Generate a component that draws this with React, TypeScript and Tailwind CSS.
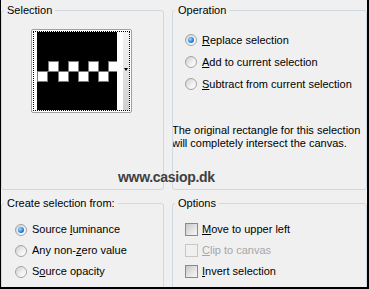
import type { ReactNode } from 'react';

function GroupBox({ title, children }: { title: string; children?: ReactNode }) {
  return (
    <fieldset className="min-w-0 overflow-hidden rounded-[3px] border border-[#d0d9df]">
      <legend className="ml-[2px] px-[3px] text-[11px] leading-[13px]">{title}</legend>
      {children}
    </fieldset>
  );
}

function Radio({ checked = false }: { checked?: boolean }) {
  return (
    <span className="flex h-[12px] w-[12px] flex-shrink-0 items-center justify-center rounded-full border border-[#a3a3a3] bg-[linear-gradient(135deg,#cfcfcf,#f2f2f2_60%,#ffffff)]">
      {checked && (
        <span className="h-[6px] w-[6px] rounded-full bg-[radial-gradient(circle_at_35%_35%,#9fdcff,#2a86e0_55%,#0d4f9e)]" />
      )}
    </span>
  );
}

function Check({ disabled = false }: { disabled?: boolean }) {
  return (
    <span
      className={`h-[13px] w-[13px] flex-shrink-0 border ${
        disabled
          ? 'border-[#cac8bb] bg-[#f0f0f0]'
          : 'border-[#8a8a8a] bg-[linear-gradient(135deg,#c8c8c8,#e6e6e6_60%,#f6f6f6)]'
      }`}
    />
  );
}

// underline for the access-key letter
function Key({ children }: { children: ReactNode }) {
  return <span className="underline decoration-1 underline-offset-[1px]">{children}</span>;
}

function Thumbnail() {
  const top = [11, 31, 51, 71];
  const bottom = [0, 21, 41, 61];
  return (
    <div className="ml-[29px] mt-[12px] h-[84px] w-[101px] rounded-[2px] border border-[#a0a0a0] bg-white p-[1px]">
      <div className="flex h-full w-full border border-dotted border-black">
        <div className="w-[3px] bg-white" />
        <svg width="80" height="78" viewBox="0 0 80 78" className="block">
          <rect width="80" height="78" fill="#000" />
          {top.map((x) => (
            <rect key={`t-${x}`} x={x + 0.5} y={29.5} width={10} height={10} fill="#fff" stroke="#7a7a7a" />
          ))}
          {bottom.map((x) => (
            <rect key={`b-${x}`} x={x + 0.5} y={39.5} width={10} height={10} fill="#fff" stroke="#7a7a7a" />
          ))}
        </svg>
        <div className="w-[6px] bg-white" />
        <div className="w-[6px] bg-[linear-gradient(180deg,#f2f2f2,#e4e4e4_50%,#cfcfcf)] pt-[36px]">
          <div className="ml-[1px] h-0 w-0 border-x-[2.5px] border-t-[3px] border-x-transparent border-t-black" />
        </div>
      </div>
    </div>
  );
}

export default function App() {
  return (
    <div className="relative h-[289px] w-[369px] overflow-hidden border-b-2 border-l border-r-2 border-black bg-[#f0f0f0] pt-[4px] font-['Liberation_Sans',Arial,sans-serif] text-[11px] leading-[13px] text-black">
      <div className="grid grid-cols-[163px_195px] grid-rows-[186px_95px] gap-x-[8px] gap-y-[7px]">
        <GroupBox title="Selection">
          <Thumbnail />
        </GroupBox>

        <GroupBox title="Operation">
          <div className="mt-[12px] pl-[12px]">
            <div className="flex h-[22px] items-center gap-[5px]">
              <Radio checked />
              <span><Key>R</Key>eplace selection</span>
            </div>
            <div className="flex h-[22px] items-center gap-[5px]">
              <Radio />
              <span><Key>A</Key>dd to current selection</span>
            </div>
            <div className="flex h-[22px] items-center gap-[5px]">
              <Radio />
              <span><Key>S</Key>ubtract from current selection</span>
            </div>
          </div>
          <p className="-ml-[1px] mt-[29px] leading-[13px]">
            The original rectangle for this selection
            <br />
            will completely intersect the canvas.
          </p>
        </GroupBox>

        <GroupBox title="Create selection from:">
          <div className="mt-[9px] pl-[13px]">
            <div className="flex h-[21px] items-center gap-[5px]">
              <Radio checked />
              <span>Source <Key>l</Key>uminance</span>
            </div>
            <div className="flex h-[21px] items-center gap-[5px]">
              <Radio />
              <span>Any non-<Key>z</Key>ero value</span>
            </div>
            <div className="flex h-[21px] items-center gap-[5px]">
              <Radio />
              <span>S<Key>o</Key>urce opacity</span>
            </div>
          </div>
        </GroupBox>

        <GroupBox title="Options">
          <div className="mt-[9px] pl-[12px]">
            <div className="flex h-[21px] items-center gap-[4px]">
              <Check />
              <span><Key>M</Key>ove to upper left</span>
            </div>
            <div className="flex h-[21px] items-center gap-[4px] text-[#a7a6aa]">
              <Check disabled />
              <span><Key>C</Key>lip to canvas</span>
            </div>
            <div className="flex h-[21px] items-center gap-[4px]">
              <Check />
              <span><Key>I</Key>nvert selection</span>
            </div>
          </div>
        </GroupBox>
      </div>

      {/* watermark over the dialog */}
      <div className="absolute left-[117px] top-[169px] text-[14px] font-bold leading-[17px] tracking-[-0.3px] text-[#404040]">
        www.casiop.dk
      </div>
    </div>
  );
}
